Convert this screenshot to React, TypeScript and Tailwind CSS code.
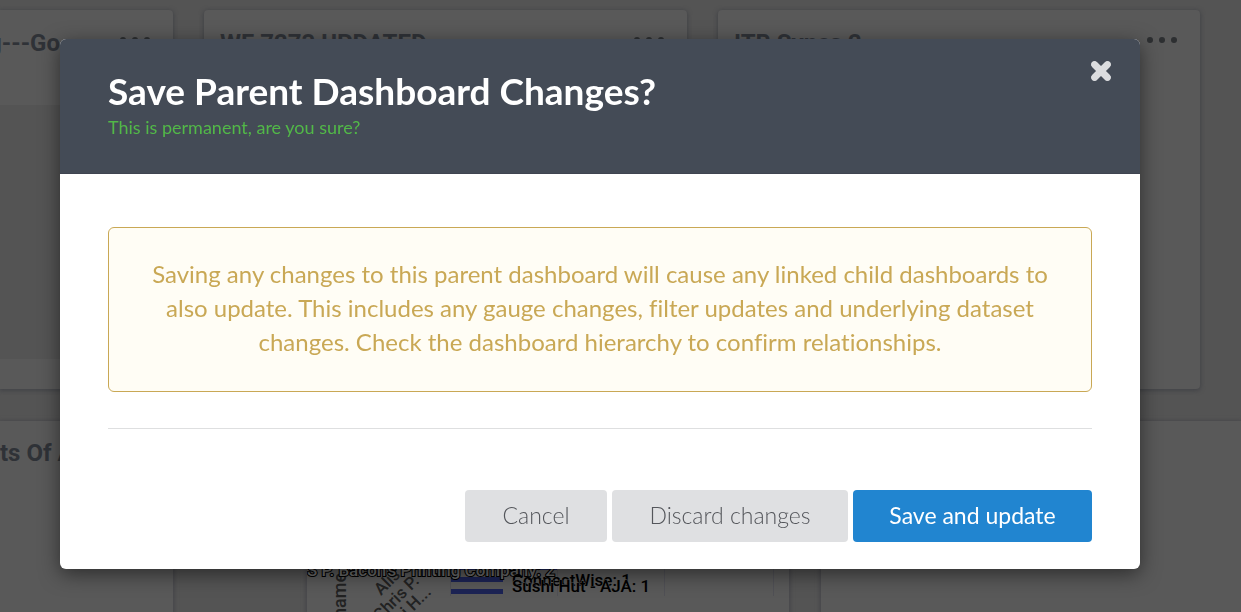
import type { ReactNode } from 'react';
import { clsx } from 'clsx';

function Dots() {
  return (
    <svg className="mb-[6px] h-6 w-8 shrink-0" viewBox="0 0 32 24" fill="#2d2f31" aria-hidden="true">
      <circle cx="4" cy="12" r="3" />
      <circle cx="16" cy="12" r="3" />
      <circle cx="28" cy="12" r="3" />
    </svg>
  );
}

interface CardProps {
  title?: string;
  menu?: boolean;
  clipped?: boolean;
  className?: string;
  children?: ReactNode;
}

function Card({ title, menu, clipped, className, children }: CardProps) {
  return (
    <section className={clsx('flex shrink-0 flex-col bg-[#595959] shadow-[0_1px_4px_1px_#434448]', className)}>
      {title && (
        <header className={clsx('flex h-[66px] items-center justify-between pr-[22px]', clipped ? '-ml-3' : 'pl-4')}>
          <h2 className="text-2xl font-bold whitespace-nowrap text-[#2f3237]">{title}</h2>
          {menu && <Dots />}
        </header>
      )}
      {children}
    </section>
  );
}

function BarChart() {
  return (
    <svg className="h-48 w-full" viewBox="0 0 482 192" preserveAspectRatio="xMinYMin slice" aria-hidden="true">
      <path d="M143.500 90V175M250.500 90V175M357.500 90V175M466.500 90V175" stroke="#505055" />
      <rect x="144" y="144" width="106" height="5" fill="#1c2354" />
      <rect x="144" y="156" width="52" height="5" fill="#1c2354" />
      <rect x="144" y="168" width="52" height="5" fill="#1c2354" />
      <g fontFamily="Roboto, sans-serif" fontWeight="500" fill="#222">
        <text transform="translate(39 197) rotate(-90)" fontSize="18">name</text>
        <g fontSize="17">
          <text transform="translate(74 175) rotate(-45)">Alis</text>
          <g textAnchor="end">
            <text transform="translate(113 161) rotate(-45)">Chris P.</text>
            <text transform="translate(125 172) rotate(-45)">Sushi H...</text>
          </g>
        </g>
      </g>
      <g fontFamily="Roboto, sans-serif" fontWeight="500" fontSize="17" fill="#000">
        <text x="0" y="155" fill="#6a6a6a" stroke="#000" strokeWidth="2" paintOrder="stroke">
          S P. Bacon's Printing Company: 2
        </text>
        <text x="205" y="165">ConnectWise: 1</text>
        <text x="205" y="171" stroke="#595959" strokeWidth="1" paintOrder="stroke">Sushi Hut - AJA: 1</text>
      </g>
    </svg>
  );
}

function Dashboard() {
  return (
    <main className="flex h-screen flex-col gap-8 overflow-hidden bg-[#545454] pt-[10px] font-['Roboto',sans-serif]">
      <div className="flex h-[379px] shrink-0 gap-[31px]">
        <Card title="g---Go" menu clipped className="w-[173px] rounded-r">
          <div className="mt-[29px] mb-[30px] flex-1 bg-[#545454]" />
        </Card>
        <Card title="WF 7273 UPDATED" menu className="w-[483px] rounded" />
        <Card title="ITB Syncs 2" menu className="w-[482px] rounded" />
      </div>
      <div className="flex flex-1">
        <Card className="mr-[134px] w-[173px]">
          <h2 className="text-2xl leading-[64px] font-bold whitespace-nowrap text-[#2f3237]">ts Of A</h2>
        </Card>
        <Card className="mr-8 w-[482px]">
          <BarChart />
        </Card>
        <Card className="flex-1" />
      </div>
    </main>
  );
}

export default function App() {
  return (
    <>
      <Dashboard />
      <div className="fixed inset-0 pt-[39px] pr-[101px] pl-[60px] font-['Lato',sans-serif] [font-variant-ligatures:none]">
        <div
          role="dialog"
          aria-labelledby="dialog-title"
          className="mx-auto max-w-[1080px] overflow-hidden rounded-md bg-white shadow-[0_5px_20px_rgba(0,0,0,0.5)]"
        >
          <header className="flex h-[135px] items-start justify-between border-b border-[#3f4450] bg-[#444b56] pt-[31px] pr-7 pl-12">
            <div>
              <h1 id="dialog-title" className="text-[37px] leading-[42px] font-bold text-white">
                Save Parent Dashboard Changes?
              </h1>
              <p className="text-[18px] leading-[30px] text-[#52b848]">This is permanent, are you sure?</p>
            </div>
            <button type="button" aria-label="Close" className="-mt-[10px]">
              <svg className="size-[22px]" viewBox="0 0 22 22" stroke="#dcdddf" strokeLinecap="round" aria-hidden="true">
                <path d="M4.200 4.200L17.800 17.800M17.800 4.200L4.200 17.800" strokeWidth="6" />
                <path d="M3.800 5.200L16.800 18.200M5.200 3.800L18.200 16.800M18.200 5.200L5.200 18.200M16.800 3.800L3.800 16.800" strokeWidth="5" />
              </svg>
            </button>
          </header>

          <div className="px-12 pt-[53px] pb-[27px]">
            <p className="rounded-md border border-[#c9a855] bg-[#fffdf5] px-8 pt-[29px] pb-8 text-center text-[24px] leading-[34px] text-[#c9a855]">
              Saving any changes to this parent dashboard will cause any linked child dashboards to also update. This
              includes any gauge changes, filter updates and underlying dataset changes. Check the dashboard hierarchy to
              confirm relationships.
            </p>
            <div className="mt-9 flex justify-end gap-[5px] border-t border-[#dedfe0] pt-[61px] text-[23px]">
              <button type="button" className="h-[52px] w-[142px] rounded bg-[#dfe0e2] pb-[2px] font-light text-[#54565b]">
                Cancel
              </button>
              <button type="button" className="h-[52px] w-[236px] rounded bg-[#dfe0e2] pb-[2px] font-light text-[#54565b]">
                Discard changes
              </button>
              <button type="button" className="h-[52px] w-[239px] rounded bg-[#2185d0] pb-[2px] text-white">
                Save and update
              </button>
            </div>
          </div>
        </div>
      </div>
    </>
  );
}
